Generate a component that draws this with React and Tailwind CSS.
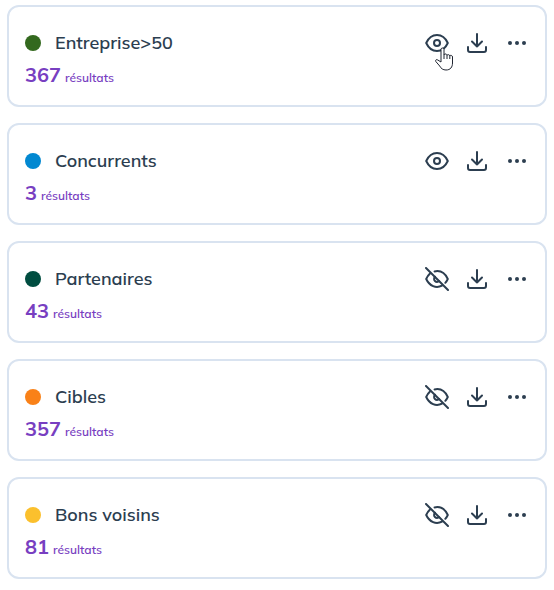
const groups = [
  { name: "Entreprise>50", count: 367, color: "bg-[#33691e]", visible: true, hovered: true },
  { name: "Concurrents", count: 3, color: "bg-[#0288d1]", visible: true },
  { name: "Partenaires", count: 43, color: "bg-[#004d40]", visible: false },
  { name: "Cibles", count: 357, color: "bg-[#f98118]", visible: false },
  { name: "Bons voisins", count: 81, color: "bg-[#fbc02d]", visible: false },
];

export default function App() {
  return (
    <ul className="flex flex-col gap-4 bg-white px-[7px] py-[5px] font-['Mulish','Noto_Sans',sans-serif]">
      {groups.map((group) => (
        <GroupCard key={group.name} group={group} />
      ))}
    </ul>
  );
}

function GroupCard({ group }) {
  return (
    <li className="rounded-xl border-2 border-[#d9e3f0] px-4 pt-[22px] pb-4">
      <div className="flex items-center justify-between">
        <div className="flex items-center gap-[14px]">
          <span className={`size-4 rounded-full ${group.color}`} />
          <h2 className="text-[18px] leading-7 font-semibold text-[#2c3e50]">{group.name}</h2>
        </div>
        <div className="flex items-center gap-4">
          <div className="relative flex">
            <IconButton label={group.visible ? "Masquer" : "Afficher"}>
              {group.visible ? <EyeIcon /> : <EyeOffIcon />}
            </IconButton>
            {group.hovered && <HandCursor />}
          </div>
          <IconButton label="Télécharger">
            <DownloadIcon />
          </IconButton>
          <IconButton label="Plus d'options">
            <DotsIcon />
          </IconButton>
        </div>
      </div>
      <p className="mt-1 flex items-baseline gap-1 text-[#783fc1]">
        <span className="text-[20px] leading-7 font-bold">{group.count}</span>
        <span className="text-[12px] leading-4 font-semibold">résultats</span>
      </p>
    </li>
  );
}

function IconButton({ label, children }) {
  return (
    <button type="button" aria-label={label} className="size-6 cursor-pointer text-[#2c3e50]">
      {children}
    </button>
  );
}

function Icon({ children }) {
  return (
    <svg
      viewBox="0 0 24 24"
      className="block size-6"
      fill="none"
      stroke="currentColor"
      strokeWidth="2"
      strokeLinecap="round"
      strokeLinejoin="round"
      aria-hidden="true"
    >
      {children}
    </svg>
  );
}

function EyeIcon() {
  return (
    <Icon>
      <path d="M1.200 12C3.500 7 7.300 4 12 4s8.500 3 10.800 8C20.500 17 16.700 20 12 20S3.500 17 1.200 12Z" />
      <circle cx="12" cy="12" r="3" />
    </Icon>
  );
}

function EyeOffIcon() {
  return (
    <Icon>
      <path d="M1 1l22 22" />
      <path d="M9.500 4.400C16 3 20.500 7 22.800 12c-.7 1.500-1.500 2.700-2.500 3.800" />
      <path d="M5 6.500C3.400 8 2.200 9.700 1.200 12 4.500 19 11 21.800 17 18.700" />
      <path d="M10 9.800a3 3 0 0 0 4.200 4.300" />
    </Icon>
  );
}

function DownloadIcon() {
  return (
    <Icon>
      <path d="M12 3v12.500M7 10.500l5 5 5-5" />
      <path d="M3 16v3a2 2 0 0 0 2 2h14a2 2 0 0 0 2-2v-3" />
    </Icon>
  );
}

function DotsIcon() {
  return (
    <Icon>
      <g fill="currentColor" stroke="none">
        <circle cx="5" cy="12" r="2" />
        <circle cx="12" cy="12" r="2" />
        <circle cx="19" cy="12" r="2" />
      </g>
    </Icon>
  );
}

function HandCursor() {
  return (
    <svg
      viewBox="0 0 18 24"
      className="pointer-events-none absolute top-4 left-2.5 h-6 w-[18px]"
      fill="#fff"
      stroke="#1f2430"
      strokeLinejoin="round"
      aria-hidden="true"
    >
      <path d="M6 15V2.500a1.500 1.500 0 0 1 3 0V8c0-1.500 3-1.500 3 .5 0-1.300 2.800-1.200 2.800.7 0-1.300 2.700-1.200 2.700.8v6c0 4-2 7-6.500 7-3 0-5-1.500-6.300-4L.8 14.500c-.8-1.500.8-2.500 2-1.500Z" />
      <path d="M9 8v4M12 8.500V12M14.800 9.200V12" fill="none" />
    </svg>
  );
}
